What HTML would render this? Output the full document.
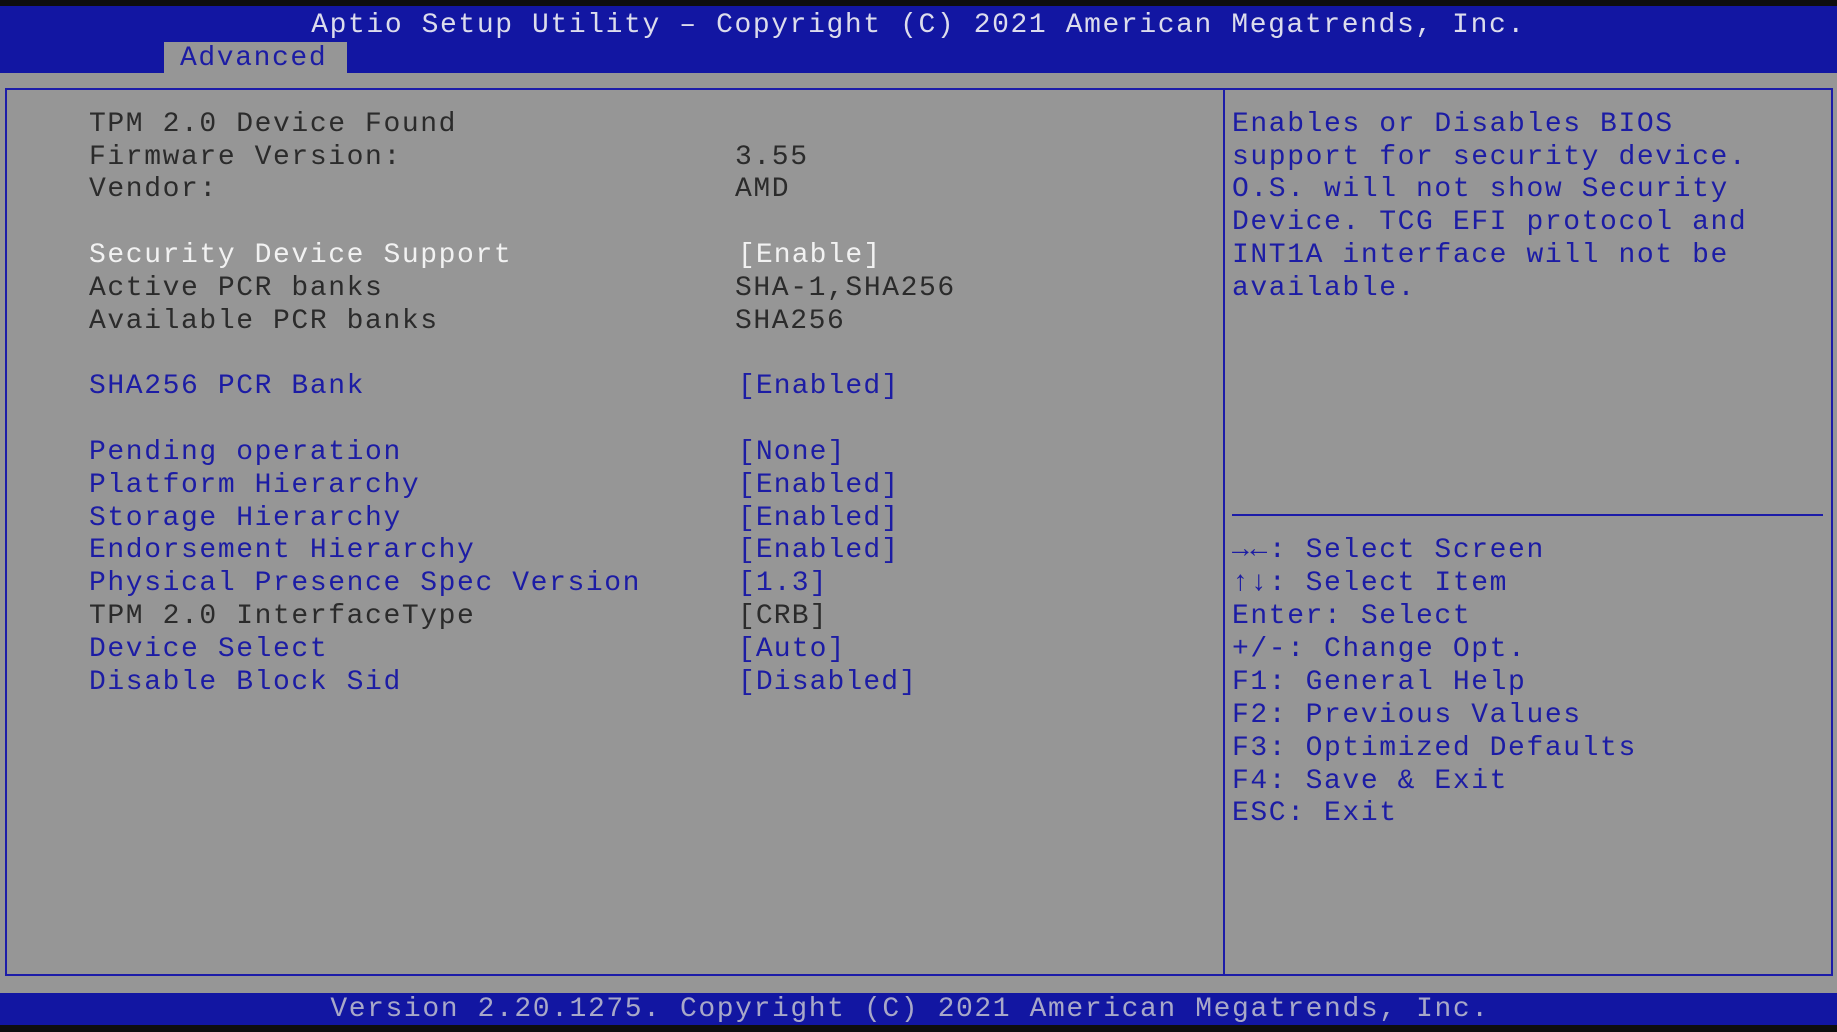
<!DOCTYPE html>
<html><head><meta charset="utf-8"><style>
*{margin:0;padding:0;box-sizing:border-box}
body{width:1837px;height:1032px;background:#0e0e0e;position:relative;overflow:hidden;font-family:"Liberation Mono","DejaVu Sans Mono",monospace;font-size:28px;letter-spacing:1.6px}
.hdr{position:absolute;left:0;top:6px;width:1837px;height:67px;background:#1216a2}
.body{position:absolute;left:0;top:73px;width:1837px;height:920px;background:#969696}
.ftr{position:absolute;left:0;top:993px;width:1837px;height:32px;background:#1216a2}
.tab{position:absolute;left:164px;top:42px;width:183px;height:31px;background:#969696}
.box{position:absolute;border:2px solid #1c1ca8}
.t{position:absolute;line-height:32px;white-space:pre;margin-top:3px}
.k{color:#2b2b2b}.b{color:#1c1ca4}.w{color:#f2f2f2}.h{color:#dcdcec}
.v{letter-spacing:1.1px}
</style></head><body>
<div class="hdr"></div><div class="body"></div><div class="ftr"></div>
<div class="tab"></div>
<div class="t h" style="left:0;width:1837px;text-align:center;top:7px">Aptio Setup Utility – Copyright (C) 2021 American Megatrends, Inc.</div>
<div class="t b" style="left:180px;top:40px">Advanced</div>
<div class="box" style="left:5px;top:88px;width:1220px;height:888px"></div>
<div class="box" style="left:1223px;top:88px;width:610px;height:888px"></div>
<div style="position:absolute;left:1232px;top:514px;width:591px;height:2px;background:#1c1ca8"></div>

<div class="t k" style="left:89px;top:106px">TPM 2.0 Device Found</div>
<div class="t k" style="left:89px;top:139px">Firmware Version:</div><div class="t k" style="left:735px;top:139px">3.55</div>
<div class="t k" style="left:89px;top:171px">Vendor:</div><div class="t k" style="left:735px;top:171px">AMD</div>
<div class="t w" style="left:89px;top:237px">Security Device Support</div><div class="t w v" style="left:738px;top:237px">[Enable]</div>
<div class="t k" style="left:89px;top:270px">Active PCR banks</div><div class="t k" style="left:735px;top:270px">SHA-1,SHA256</div>
<div class="t k" style="left:89px;top:303px">Available PCR banks</div><div class="t k" style="left:735px;top:303px">SHA256</div>
<div class="t b" style="left:89px;top:368px">SHA256 PCR Bank</div><div class="t b v" style="left:738px;top:368px">[Enabled]</div>
<div class="t b" style="left:89px;top:434px">Pending operation</div><div class="t b v" style="left:738px;top:434px">[None]</div>
<div class="t b" style="left:89px;top:467px">Platform Hierarchy</div><div class="t b v" style="left:738px;top:467px">[Enabled]</div>
<div class="t b" style="left:89px;top:500px">Storage Hierarchy</div><div class="t b v" style="left:738px;top:500px">[Enabled]</div>
<div class="t b" style="left:89px;top:532px">Endorsement Hierarchy</div><div class="t b v" style="left:738px;top:532px">[Enabled]</div>
<div class="t b" style="left:89px;top:565px">Physical Presence Spec Version</div><div class="t b v" style="left:738px;top:565px">[1.3]</div>
<div class="t k" style="left:89px;top:598px">TPM 2.0 InterfaceType</div><div class="t k v" style="left:738px;top:598px">[CRB]</div>
<div class="t b" style="left:89px;top:631px">Device Select</div><div class="t b v" style="left:738px;top:631px">[Auto]</div>
<div class="t b" style="left:89px;top:664px">Disable Block Sid</div><div class="t b v" style="left:738px;top:664px">[Disabled]</div>

<div class="t b" style="left:1232px;top:106px">Enables or Disables BIOS</div>
<div class="t b" style="left:1232px;top:139px">support for security device.</div>
<div class="t b" style="left:1232px;top:171px">O.S. will not show Security</div>
<div class="t b" style="left:1232px;top:204px">Device. TCG EFI protocol and</div>
<div class="t b" style="left:1232px;top:237px">INT1A interface will not be</div>
<div class="t b" style="left:1232px;top:270px">available.</div>

<div class="t b" style="left:1232px;top:532px"><b>→←</b>: Select Screen</div>
<div class="t b" style="left:1232px;top:565px"><b>↑↓</b>: Select Item</div>
<div class="t b" style="left:1232px;top:598px">Enter: Select</div>
<div class="t b" style="left:1232px;top:631px">+/-: Change Opt.</div>
<div class="t b" style="left:1232px;top:664px">F1: General Help</div>
<div class="t b" style="left:1232px;top:697px">F2: Previous Values</div>
<div class="t b" style="left:1232px;top:730px">F3: Optimized Defaults</div>
<div class="t b" style="left:1232px;top:763px">F4: Save &amp; Exit</div>
<div class="t b" style="left:1232px;top:795px">ESC: Exit</div>

<div class="t" style="left:0;width:1820px;text-align:center;top:991px;color:#a8a8c8;letter-spacing:1.6px">Version 2.20.1275. Copyright (C) 2021 American Megatrends, Inc.</div>
</body></html>
